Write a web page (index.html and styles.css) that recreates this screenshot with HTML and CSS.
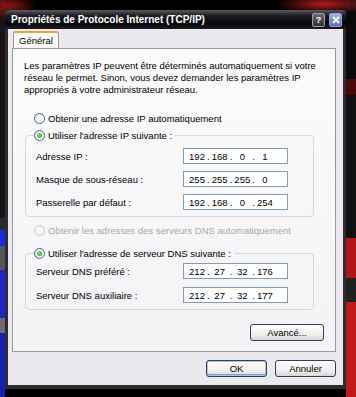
FILE: index.html
```html
<!DOCTYPE html>
<html lang="fr">
<head>
  <meta charset="UTF-8">
  <meta name="viewport" content="width=device-width, initial-scale=1.0">
  <title>Propriétés de Protocole Internet (TCP/IP)</title>
  <link rel="stylesheet" href="styles.css">
</head>
<body>
  <div class="desk">
    <div class="window">
      <div class="titlebar">
        <span class="title">Propriétés de Protocole Internet (TCP/IP)</span>
        <span class="tbtn help">?</span>
        <span class="tbtn close">
          <svg width="8" height="8" viewBox="0 0 8 8"><path d="M1 1 L7 7 M7 1 L1 7" stroke="#fff" stroke-width="1.8"/></svg>
        </span>
      </div>
      <div class="client">
        <div class="tabs"><span class="tab">Général</span></div>
        <div class="panel">
          <p class="intro">Les paramètres IP peuvent être déterminés automatiquement si votre<br>réseau le permet. Sinon, vous devez demander les paramètres IP<br>appropriés à votre administrateur réseau.</p>

          <div class="radio-row first"><span class="radio"></span>Obtenir une adresse IP automatiquement</div>

          <fieldset class="group ip-group">
            <legend><span class="radio checked"></span>Utiliser l'adresse IP suivante :</legend>
            <div class="field">
              <span>Adresse IP :</span>
              <div class="ip"><span>192</span>.<span>168</span>.<span>0</span>.<span>1</span></div>
            </div>
            <div class="field">
              <span>Masque de sous-réseau :</span>
              <div class="ip"><span>255</span>.<span>255</span>.<span>255</span>.<span>0</span></div>
            </div>
            <div class="field">
              <span>Passerelle par défaut :</span>
              <div class="ip"><span>192</span>.<span>168</span>.<span>0</span>.<span>254</span></div>
            </div>
          </fieldset>

          <div class="radio-row disabled"><span class="radio"></span>Obtenir les adresses des serveurs DNS automatiquement</div>

          <fieldset class="group dns-group">
            <legend><span class="radio checked"></span>Utiliser l'adresse de serveur DNS suivante :</legend>
            <div class="field">
              <span>Serveur DNS préféré :</span>
              <div class="ip"><span>212</span>.<span>27</span>.<span>32</span>.<span>176</span></div>
            </div>
            <div class="field">
              <span>Serveur DNS auxiliaire :</span>
              <div class="ip"><span>212</span>.<span>27</span>.<span>32</span>.<span>177</span></div>
            </div>
          </fieldset>

          <div class="adv-row"><button class="btn adv">Avancé...</button></div>
        </div>
        <div class="actions">
          <button class="btn default">OK</button>
          <button class="btn">Annuler</button>
        </div>
      </div>
    </div>
  </div>
</body>
</html>
```

FILE: styles.css
```css
body {
  margin: 0;
  background-color: #000;
  font-family: "Liberation Sans", Arial, sans-serif;
  font-size: 9.5px;
  color: #000;
}

.desk {
  width: 356px;
  height: 397px;
  overflow: hidden;
  padding: 10px 0 0 5px;
  box-sizing: border-box;
  background:
    radial-gradient(ellipse 30px 14px at 8px 6px, #8a1414, transparent),
    radial-gradient(ellipse 50px 10px at 325px 4px, #b01c1c, transparent),
    linear-gradient(#1a1416 0 55%, #2a2a30 55% 58%, #1d2bd6 58% 62%, #55565c 62% 68%, #1a27c0 68% 80%, #6a6a70 80% 84%, #1422b0 84%) 0 0 / 5px 397px no-repeat,
    linear-gradient(#0a0a0a 0 20%, #4a0808 20% 24%, #111 24% 60%, #b51414 60% 70%, #222 70% 76%, #c21818 76%) 346px 0 / 10px 397px no-repeat,
    #000;
}

.window {
  width: 341px;
  height: 379px;
  display: flex;
  flex-direction: column;
  background-color: #2c2c32;
}

.titlebar {
  height: 19px;
  display: flex;
  align-items: center;
  gap: 4px;
  padding: 0 4px 0 6px;
  background: linear-gradient(#5a5a62, #1c1c22 30%, #08080c 70%, #1a1a20);
  border-radius: 5px 5px 0 0;
}

.title {
  flex: 1;
  color: #fff;
  font-weight: bold;
  font-size: 10px;
  white-space: nowrap;
}

.tbtn {
  width: 11px;
  height: 12px;
  border: 1px solid #9aa0b0;
  border-radius: 2px;
  display: flex;
  align-items: center;
  justify-content: center;
  color: #fff;
  font-weight: bold;
  font-size: 9px;
}

.help {
  background: linear-gradient(#6a6a74, #303038);
}

.close {
  background: linear-gradient(#9fb4ea, #4f70c8);
}

.client {
  flex: 1;
  margin: 0 3px 4px 3px;
  padding: 4px 7px 0 4px;
  background-color: #ebe9ed;
  display: flex;
  flex-direction: column;
}

.tabs {
  display: flex;
  padding-left: 1px;
  height: 15px;
  position: relative;
  z-index: 1;
}

.tab {
  height: 17px;
  margin-top: -2px;
  padding: 0 5px;
  line-height: 16px;
  background-color: #fcfcfd;
  border: 1px solid #919b9c;
  border-bottom: none;
  border-top: 2px solid #f1a23a;
  border-radius: 3px 3px 0 0;
  box-sizing: border-box;
}

.panel {
  height: 304px;
  box-sizing: border-box;
  border: 1px solid #919b9c;
  background: linear-gradient(#fbfbfc, #f3f3f6);
  padding: 11px 11px 0 11px;
}

.intro {
  margin: 0;
  line-height: 12px;
  white-space: nowrap;
}

.radio-row {
  display: flex;
  align-items: center;
  gap: 3px;
  height: 13px;
  margin-left: 10px;
  margin-top: 7px;
}

.radio-row.first {
  margin-top: 16px;
}

.radio-row.disabled {
  color: #aca899;
}

.radio {
  width: 11px;
  height: 11px;
  box-sizing: border-box;
  border: 1px solid #4d6185;
  border-radius: 50%;
  background: radial-gradient(circle at 60% 60%, #fff 40%, #dcdcd8);
  display: inline-flex;
  align-items: center;
  justify-content: center;
}

.radio.checked::after {
  content: "";
  width: 5px;
  height: 5px;
  border-radius: 50%;
  background: radial-gradient(circle at 40% 40%, #7be07b, #1f9a1f);
}

.disabled .radio {
  border-color: #cac8bb;
  background: #f6f6f4;
}

.group {
  margin: 4px 10px 0 1px;
  padding: 6px 10px 6px 10px;
  border: 1px solid #d8d8d4;
  border-radius: 4px;
}

.group legend {
  display: flex;
  align-items: center;
  gap: 3px;
  height: 13px;
  padding: 0 3px 0 0;
  margin-left: -2px;
}

.dns-group {
  margin-top: 10px;
  padding-top: 3px;
}

.field {
  display: grid;
  grid-template-columns: 147px 105px;
  align-items: center;
  height: 16px;
}

.field + .field {
  margin-top: 7px;
}

.dns-group .field + .field {
  margin-top: 8px;
}

.ip {
  height: 16px;
  box-sizing: border-box;
  border: 1px solid #7f9db9;
  background-color: #fff;
  display: flex;
  align-items: center;
  padding-left: 3px;
}

.ip span {
  width: 20px;
  text-align: center;
}

.adv-row {
  display: flex;
  justify-content: flex-end;
  margin-top: 14px;
}

.btn {
  font-family: "Liberation Sans", Arial, sans-serif;
  font-size: 9.5px;
  color: #000;
  height: 17px;
  padding: 0;
  border: 1px solid #2e3e5e;
  border-radius: 3px;
  background: linear-gradient(#ffffff, #f2f1ee 60%, #d9d7d2);
  cursor: pointer;
}

.adv {
  width: 74px;
}

.actions {
  display: flex;
  justify-content: flex-end;
  gap: 8px;
  margin-top: 8px;
}

.actions .btn {
  width: 61px;
}

.btn.default {
  box-shadow: inset 0 0 0 1px #a9c1ec, inset 0 -1px 0 1px #7c9ee0;
}
```
